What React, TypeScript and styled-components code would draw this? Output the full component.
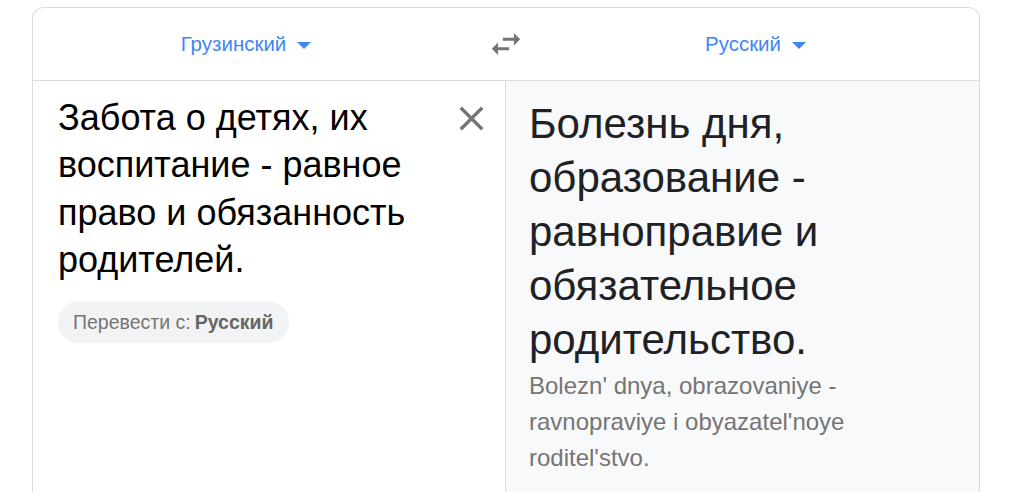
import React from "react";
import styled, { createGlobalStyle } from "styled-components";

const Global = createGlobalStyle`
  html, body { margin: 0; padding: 0; background: #fff; }
  body { font-family: "Liberation Sans", Arial, sans-serif; overflow: hidden; }
`;

const Page = styled.div`
  padding: 7px 31px 0 32px;
  height: 492px;
  box-sizing: border-box;
  overflow: hidden;
`;

const Card = styled.div`
  border: 1px solid #dadce0;
  border-bottom: none;
  border-radius: 12px 12px 0 0;
  height: 520px;
  display: flex;
  flex-direction: column;
`;

const Header = styled.div`
  height: 72px;
  border-bottom: 1px solid #dadce0;
  display: grid;
  grid-template-columns: 426px 94px 1fr;
  align-items: center;
`;

const LangButton = styled.div<{ $shift?: number }>`
  display: flex;
  align-items: center;
  justify-content: center;
  gap: 11px;
  color: #4285f4;
  font-size: 20.5px;
  padding-right: ${(p) => p.$shift ?? 0}px;
`;

const Caret = styled.span`
  width: 0;
  height: 0;
  border-left: 7px solid transparent;
  border-right: 7px solid transparent;
  border-top: 7px solid #4285f4;
  margin-top: 3px;
`;

const SwapCell = styled.div`
  display: flex;
  justify-content: center;
  align-items: center;
  color: #757575;
`;

const Body = styled.div`
  flex: 1;
  display: grid;
  grid-template-columns: 472px 1fr;
`;

const SourcePane = styled.div`
  padding: 13px 10px 0 25px;
  display: flex;
  flex-direction: column;
  align-items: flex-start;
`;

const SourceRow = styled.div`
  display: flex;
  align-items: flex-start;
  width: 100%;
`;

const SourceText = styled.div`
  flex: 1;
  font-size: 36px;
  line-height: 47.3px;
  color: #000;
`;

const CloseButton = styled.div`
  width: 48px;
  height: 48px;
  display: flex;
  align-items: center;
  justify-content: center;
  color: #757575;
  flex-shrink: 0;
`;

const DetectChip = styled.div`
  margin-top: 18px;
  height: 42px;
  border-radius: 21px;
  background: #f1f3f4;
  display: flex;
  align-items: center;
  padding: 0 15px;
  font-size: 19.5px;
  color: #757575;
  gap: 4px;
`;

const ChipLang = styled.b`
  font-weight: 700;
  color: #666;
`;

const TargetPane = styled.div`
  background: #f8f9fa;
  border-left: 1px solid #dadce0;
  padding: 16px 24px 0 23px;
`;

const TargetText = styled.div`
  font-size: 42px;
  line-height: 54px;
  color: #202124;
`;

const Translit = styled.div`
  margin-top: 1px;
  font-size: 24px;
  line-height: 36px;
  color: #757575;
  max-width: 360px;
`;

export default function App() {
  return (
    <>
      <Global />
      <Page>
        <Card>
          <Header>
            <LangButton>
              Грузинский <Caret />
            </LangButton>
            <SwapCell>
              <svg width="38" height="38" viewBox="0 0 24 24" fill="currentColor">
                <path d="M6.99 11L3 15l3.99 4v-3H14v-2H6.99v-3zM21 9l-3.99-4v3H10v2h7.01v3L21 9z" />
              </svg>
            </SwapCell>
            <LangButton $shift={21}>
              Русский <Caret />
            </LangButton>
          </Header>
          <Body>
            <SourcePane>
              <SourceRow>
                <SourceText>
                  Забота о детях, их воспитание - равное право и обязанность родителей.
                </SourceText>
                <CloseButton>
                  <svg width="41" height="41" viewBox="0 0 24 24" fill="currentColor">
                    <path d="M19 6.41L17.59 5 12 10.59 6.41 5 5 6.41 10.59 12 5 17.59 6.41 19 12 13.41 17.59 19 19 17.59 13.41 12z" />
                  </svg>
                </CloseButton>
              </SourceRow>
              <DetectChip>
                Перевести с:<ChipLang>Русский</ChipLang>
              </DetectChip>
            </SourcePane>
            <TargetPane>
              <TargetText>
                Болезнь дня, образование - равноправие и обязательное родительство.
              </TargetText>
              <Translit>
                Bolezn' dnya, obrazovaniye - ravnopraviye i obyazatel'noye roditel'stvo.
              </Translit>
            </TargetPane>
          </Body>
        </Card>
      </Page>
    </>
  );
}
